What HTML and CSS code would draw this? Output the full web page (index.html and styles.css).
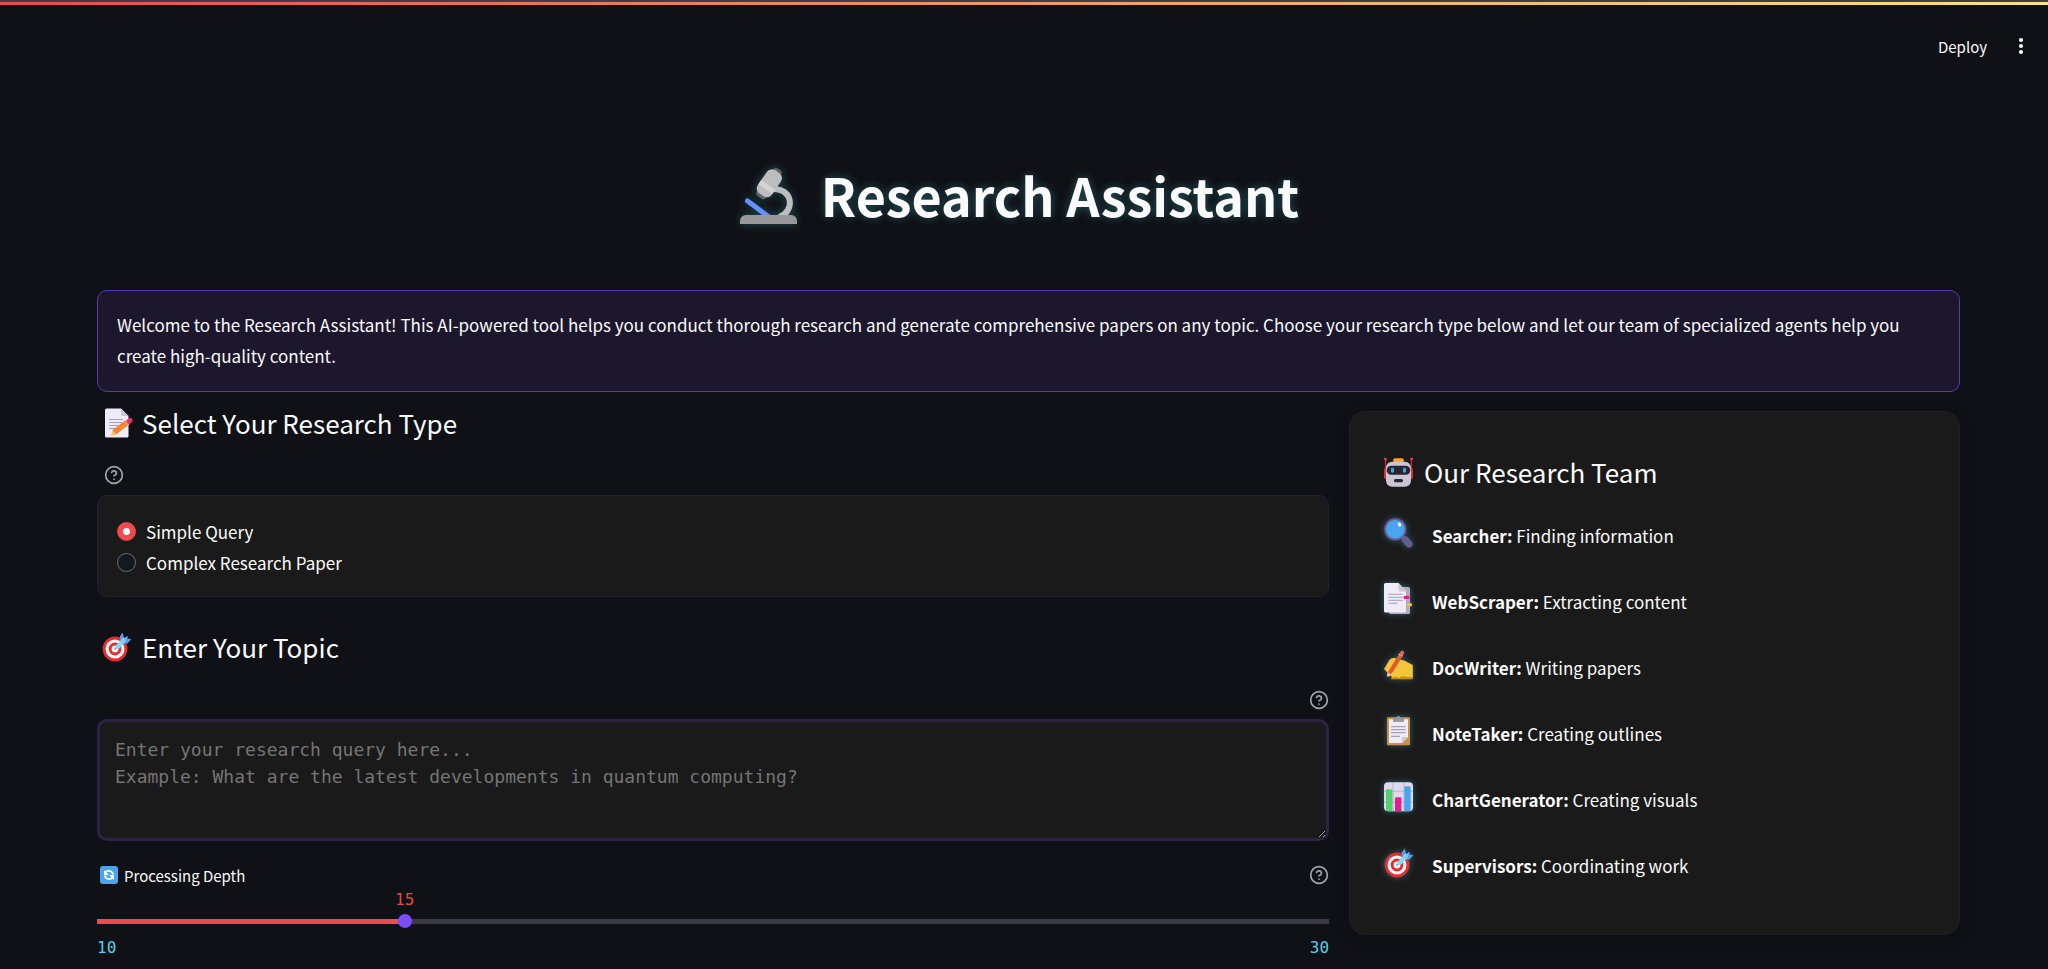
FILE: index.html
```html
<!DOCTYPE html>
<html lang="en">
<head>
<meta charset="utf-8">
<meta name="viewport" content="width=device-width, initial-scale=1">
<title>Research Assistant</title>
<link rel="stylesheet" href="styles.css">
</head>
<body>
<svg class="defs" aria-hidden="true">
  <symbol id="help" viewBox="0 0 24 24"><g fill="none" stroke="currentColor" stroke-width="2" stroke-linecap="round" stroke-linejoin="round"><circle cx="12" cy="12" r="10"/><path d="M9.09 9a3 3 0 0 1 5.83 1c0 2-3 3-3 3M12 17h.01"/></g></symbol>
  <symbol id="dart" viewBox="0 1 30 30">
    <circle cx="13" cy="18" r="12.4" fill="#e1302f"/><circle cx="13" cy="18" r="9.5" fill="#f6f3f8"/><circle cx="13" cy="18" r="6.4" fill="#e1302f"/><circle cx="13" cy="18" r="3.4" fill="#f6f3f8"/>
    <path d="M13 18l4-4" stroke="#8a9aa8" stroke-width="1.5" stroke-linecap="round"/>
    <path d="M18 8.5 17.800 5.500 20.700 1.500 22 6.500 24 7 29.300 8.300 25.500 12.500 21.500 12.500Z" fill="#5a9cf5"/>
    <path d="M16 15.500 21.500 9.500" stroke="#7be0fb" stroke-width="4.500" stroke-linecap="round"/>
    <path d="M20 11 25 6" stroke="#7cc0fb" stroke-width="1.500" stroke-linecap="round"/>
  </symbol>
</svg>

<header class="topbar">
  <button class="deploy" type="button">Deploy</button>
  <button class="menu" type="button" aria-label="Main menu">
    <svg width="6" height="18" viewBox="0 0 6 18" fill="#fafafa"><circle cx="3" cy="3" r="2.100"/><circle cx="3" cy="9" r="2.100"/><circle cx="3" cy="15" r="2.100"/></svg>
  </button>
</header>

<main class="page">
  <h1 class="title">
    <svg class="title-icon" viewBox="0 -1 60 60" aria-hidden="true">
      <path d="M34 23C56 22 57 46 41 51" fill="none" stroke="#bdbdbd" stroke-width="6"/>
      <path d="M9.500 35 31 51" stroke="#6690fb" stroke-width="5" stroke-linecap="round"/>
      <g transform="rotate(35 30.500 18.500)"><rect x="26" y="0" width="9" height="9" rx="3" fill="#636363"/><rect x="25" y="27" width="11" height="7" rx="3" fill="#636363"/><rect x="22" y="3" width="17" height="28" rx="6" fill="#bdbdbd"/><path d="M22 19h17v5H22z" fill="#d3d3d3"/></g>
      <path d="M2 58v-3a6 6 0 0 1 6-6h45a6 6 0 0 1 6 6v3z" fill="#999"/>
    </svg>
    Research Assistant
  </h1>

  <p class="welcome">Welcome to the Research Assistant! This AI-powered tool helps you conduct thorough research and generate comprehensive papers on any topic. Choose your research type below and let our team of specialized agents help you create high-quality content.</p>

  <div class="columns">
    <form class="query">
      <h2 class="heading">
        <svg class="icon" viewBox="0 0 30 30" aria-hidden="true">
          <path d="M2.500.5H17l7.500 7.500V28a1.500 1.500 0 0 1-1.500 1.500H2.500A1.500 1.500 0 0 1 1 28V2A1.500 1.500 0 0 1 2.500.5Z" fill="#f0ebf8"/><path d="M17 .5V6a2 2 0 0 0 2 2h5.500Z" fill="#cdc4d6"/>
          <path d="M5 11.500h14M5 14.500h13M5 17.500h10M5 20.500h7" stroke="#a69fb8"/>
          <path d="M10 24.500 23 14.500" stroke="#f58532" stroke-width="5.500"/><path d="M22.500 15 24 13.800" stroke="#c7c3cc" stroke-width="5.500"/><path d="M25 13.200 26 12.500" stroke="#e8316e" stroke-width="5" stroke-linecap="round"/><path d="M8.500 22 12 27 6.500 28Z" fill="#fbc96b"/>
        </svg>
        Select Your Research Type
      </h2>
      <button class="help help-start" type="button" aria-label="Help with research type"><svg><use href="#help"/></svg></button>

      <fieldset class="choices" aria-label="Research type">
        <label class="choice"><input class="radio" type="radio" name="type" checked>Simple Query</label>
        <label class="choice"><input class="radio" type="radio" name="type">Complex Research Paper</label>
      </fieldset>

      <h2 class="heading heading-topic"><svg class="icon" aria-hidden="true"><use href="#dart"/></svg>Enter Your Topic</h2>
      <button class="help help-end" type="button" aria-label="Help with topic"><svg><use href="#help"/></svg></button>
      <textarea class="topic" aria-label="Research topic" placeholder="Enter your research query here...&#10;Example: What are the latest developments in quantum computing?"></textarea>

      <div class="depth-head">
        <label class="depth-label" for="depth">
          <svg width="18" height="18" viewBox="0 0 18 18" aria-hidden="true"><rect width="18" height="18" rx="3" fill="#4aa5ef"/><path d="M5.500 6.300A4.300 4.300 0 0 1 13 8.500M12.500 11.700A4.300 4.300 0 0 1 5 9.500" fill="none" stroke="#fff" stroke-width="1.800"/><path d="M4 4v5h5ZM14 14V9H9Z" fill="#fff"/></svg>
          Processing Depth
        </label>
        <button class="help" type="button" aria-label="Help with processing depth"><svg><use href="#help"/></svg></button>
      </div>
      <div class="value-row"><output class="value" for="depth">15</output></div>
      <input class="depth" id="depth" type="range" min="10" max="30" value="15">
      <div class="bounds"><span>10</span><span>30</span></div>
    </form>

    <aside class="team">
      <h2 class="heading heading-team">
        <svg class="icon" viewBox="0 0 30 30" aria-hidden="true">
          <path d="M1.500 1.500v12M27.500 1.500v12" stroke="#c92b33" stroke-width="1.200"/><circle cx="1.500" cy="2" r="1.500" fill="#e53940"/><circle cx="27.500" cy="2" r="1.500" fill="#e53940"/><rect y="11" width="5" height="11" rx="1.500" fill="#d92f35"/><rect x="24" y="11" width="5" height="11" rx="1.500" fill="#d92f35"/>
          <rect x="9.300" y="1.300" width="10.400" height="6" rx="1.500" fill="#f9a42c"/><rect x="2" y="4.700" width="25" height="25" rx="6" fill="#cdc4d6"/><rect x="2.700" y="8.700" width="23.600" height="9" rx="4.500" fill="#26262c"/><rect x="7" y="10.700" width="3" height="5" rx="1.400" fill="#3fa4e8"/><rect x="19" y="10.700" width="3" height="5" rx="1.400" fill="#3fa4e8"/><rect x="10" y="22" width="9" height="3.300" rx="1.500" fill="#26262c"/>
        </svg>
        Our Research Team
      </h2>
      <ul class="members">
        <li class="member">
          <svg class="icon glow" viewBox="0 0 30 30" aria-hidden="true"><path d="m18 18 3 3" stroke="#8d78b5" stroke-width="3"/><path d="m21.500 22 3.500 4" stroke="#675a95" stroke-width="7" stroke-linecap="round"/><circle cx="11.300" cy="11.300" r="10.200" fill="#4aa5ef" stroke="#6d5a9c" stroke-width="1.800"/><ellipse cx="15.500" cy="6.500" rx="1.600" ry="2" fill="#fff" transform="rotate(-30 15.500 6.500)"/></svg>
          <span><strong>Searcher:</strong> Finding information</span>
        </li>
        <li class="member">
          <svg class="icon glow" viewBox="0 1 30 30" aria-hidden="true"><rect x="5" y="4" width="21" height="27" rx="1.500" fill="#b4abc0"/><path d="M1.500 0H14.500L22 8V28a1.500 1.500 0 0 1-1.500 1.500H1.500A1.500 1.500 0 0 1 0 28V1.500A1.500 1.500 0 0 1 1.500 0Z" fill="#f0ebf8"/><path d="M14.500 0V7a1.500 1.500 0 0 0 1.500 1.500h6Z" fill="#cdc4d6"/><path d="M4.300 11.300h14.400M4.300 14.300h14.400M4.300 17.300h14.400M4.300 20.300h9" stroke="#a69fb8"/><rect x="19.500" y="12.800" width="6" height="3.200" rx="1.500" fill="#e51b92"/><rect x="23" y="20.300" width="5" height="3" rx="1" fill="#f4c534"/></svg>
          <span><strong>WebScraper:</strong> Extracting content</span>
        </li>
        <li class="member">
          <svg class="icon glow" viewBox="0 0 30 30" aria-hidden="true"><path d="M7 29.300 8 26 28.800 25V29.300Z" fill="#d08a1c"/><path d="M0 19 5.500 10Q7 7.700 10 8L14 9 20 10.500 28.800 15V27H23L18 26 15 28 11 26.500 8.500 27.500 6.500 25 2.500 21.500Z" fill="#f5c63c"/><path d="M5.500 23.500 16.500 5.500" stroke="#e8562c" stroke-width="4.200"/><path d="m16.300 5.800 1-1.800" stroke="#b9b3c2" stroke-width="4.200"/><path d="m17.600 3.600.6-.9" stroke="#f0604a" stroke-width="3.800" stroke-linecap="round"/><path d="M3.500 22.300 7.200 24.700 2.500 28.500Z" fill="#f1c2a5"/><circle cx="3.300" cy="27.500" r="1.200" fill="#26262c"/><path d="M9 25 17 17" stroke="#f5c63c" stroke-width="4.500" stroke-linecap="round"/></svg>
          <span><strong>DocWriter:</strong> Writing papers</span>
        </li>
        <li class="member">
          <svg class="icon glow" viewBox="0 0 30 30" aria-hidden="true"><rect x="3" y="1.300" width="23" height="28" rx="1" fill="#d08f47"/><path d="M5 3.300h19V21l-6 6H5Z" fill="#f0ebf8"/><path d="M18 27v-4.500a1.500 1.500 0 0 1 1.500-1.500H24Z" fill="#cdc4d6"/><path d="M9 2h3.500a2 2 0 0 1 4 0H20v3a1 1 0 0 1-1 1h-9a1 1 0 0 1-1-1Z" fill="#999"/><path d="M7 10.700h14.700M7 13.700h14.700M7 16.700h14.700M7 20.300h9" stroke="#a8a4ae" stroke-width="1.200"/></svg>
          <span><strong>NoteTaker:</strong> Creating outlines</span>
        </li>
        <li class="member">
          <svg class="icon glow" viewBox="0 0 30 30" aria-hidden="true"><rect y=".3" width="29" height="29" rx="4" fill="#e0d8ec"/><path d="M9 .3v29M20 .3v29M0 9.300h29M0 20.300h29" stroke="#bbb2cb"/><path d="M2 29V8.500a1.200 1.200 0 0 1 1.200-1.200h4a1.200 1.200 0 0 1 1.200 1.200V29.300H3.500Z" fill="#52d36a"/><path d="M11 29.300V16.500a1.200 1.200 0 0 1 1.200-1.200h4a1.200 1.200 0 0 1 1.200 1.200V29.300Z" fill="#e51b92"/><path d="M20.300 29.300V5.500a1.200 1.200 0 0 1 1.200-1.200h4a1.200 1.200 0 0 1 1.200 1.200V29L25 29.300Z" fill="#4aa5ef"/></svg>
          <span><strong>ChartGenerator:</strong> Creating visuals</span>
        </li>
        <li class="member">
          <svg class="icon glow" aria-hidden="true"><use href="#dart"/></svg>
          <span><strong>Supervisors:</strong> Coordinating work</span>
        </li>
      </ul>
    </aside>
  </div>
</main>
</body>
</html>
```
FILE: styles.css
```css
* { box-sizing: border-box; }

body {
  margin: 0;
  min-height: 100vh;
  background: #0f1116;
  color: #fafafa;
  font: 17px/31px "Noto Sans CJK SC", "Open Sans", sans-serif;
}

button { padding: 0; border: 0; background: none; color: inherit; font: inherit; cursor: pointer; }

.defs { position: absolute; width: 0; height: 0; }

.topbar {
  display: flex;
  justify-content: flex-end;
  align-items: center;
  gap: 31px;
  height: 90px;
  padding-right: 24px;
  border-top: 2px solid #3f3d4c;
  background: linear-gradient(90deg, #e94b49, #f5e878) top / 100% 3px no-repeat;
}
.deploy { font-size: 15px; }
.menu { display: flex; }

.page { padding: 70px 88px 12px 97px; }

.title {
  display: flex;
  justify-content: center;
  align-items: center;
  gap: 23px;
  margin: 0 0 60px;
  padding-right: 20px;
  font-size: 52px;
  line-height: 70px;
  font-weight: 700;
  text-shadow: 0 0 10px rgba(77, 208, 225, .35);
}
.title-icon { width: 60px; height: 60px; overflow: visible; filter: drop-shadow(0 0 5px rgba(77, 208, 225, .3)); }

.welcome {
  margin: 0 0 16px;
  padding: 18px 19px 20px;
  border: 1px solid #5a38b5;
  border-radius: 10px;
  background: #1c172d;
}

.columns { display: grid; grid-template-columns: 121fr 60fr; gap: 20px; align-items: start; }

.query { display: flex; flex-direction: column; min-width: 0; }

.heading {
  display: flex;
  align-items: center;
  gap: 8px;
  margin: 0;
  padding-left: 7px;
  font-size: 26px;
  line-height: 30px;
  font-weight: 400;
}
.icon { flex: none; width: 30px; height: 30px; overflow: visible; }
.heading-topic { margin-top: 35px; padding-left: 5px; gap: 10px; }

.help { display: flex; color: #a3a5a9; }
.help svg { width: 20px; height: 20px; }
.help-start { align-self: flex-start; margin: 27px 0 10px 7px; }
.help-end { align-self: flex-end; margin: 28px 0 9px; }

.choices {
  margin: 0;
  padding: 20px 19px 18px;
  border: 1px solid #251e35;
  border-radius: 10px;
  background: #1a1a1a;
}
.choice { display: flex; align-items: center; gap: 10px; }
.radio {
  appearance: none;
  width: 19px;
  height: 19px;
  margin: 0;
  border: 1px solid #6d6f74;
  border-radius: 50%;
  background: #141820;
}
.radio:checked { border-color: #ef4b4c; background: radial-gradient(circle, #fff 3px, #ef4b4c 4px); }

.topic {
  display: block;
  width: 100%;
  height: 122px;
  padding: 14px 15px;
  border: 3px solid #2d2345;
  border-radius: 10px;
  background: #1a1a1a;
  color: #fafafa;
  font: 18px/27px "DejaVu Sans Mono", monospace;
  resize: vertical;
}
.topic::placeholder { color: #757575; opacity: 1; }

.depth-head { display: flex; justify-content: space-between; align-items: center; height: 20px; margin-top: 24px; }
.depth-label { display: flex; align-items: center; gap: 6px; padding-left: 3px; font-size: 15px; }

.value-row { width: 25%; height: 16px; margin: 7px 0 6px; }
.value { display: block; width: 20px; margin: 0 -10px 0 auto; font: 16px/16px "DejaVu Sans Mono", monospace; color: #e5484b; }

.depth {
  appearance: none;
  width: calc(100% + 14px);
  height: 15px;
  margin: 0 -7px;
  background: none;
}
.depth::-webkit-slider-runnable-track {
  height: 5px;
  border-radius: 3px;
  background: linear-gradient(90deg, #f04b4c 25%, #393a45 25%) center / calc(100% - 14px) 5px no-repeat;
}
.depth::-webkit-slider-thumb { appearance: none; width: 14px; height: 14px; margin-top: -5px; border-radius: 50%; background: #7c4dff; }

.bounds { display: flex; justify-content: space-between; margin-top: 11px; font: 16px/16px "DejaVu Sans Mono", monospace; color: #58cfe6; }

.team {
  margin-top: 3px;
  padding: 45px 34px 52px;
  border: 1px solid #221d2f;
  border-radius: 16px;
  background: #1a1a1a;
  box-shadow: 0 4px 16px rgba(0, 0, 0, .2);
}
.heading-team { gap: 10px; padding: 0; }
.members { display: grid; gap: 32px; margin: 31px 0 0; padding: 0; list-style: none; }
.member { display: flex; gap: 18px; height: 34px; }
.member span { padding-top: 2px; }
.member strong { font-weight: 700; }
.glow { filter: drop-shadow(0 0 3px rgba(77, 208, 225, .4)); }
```
